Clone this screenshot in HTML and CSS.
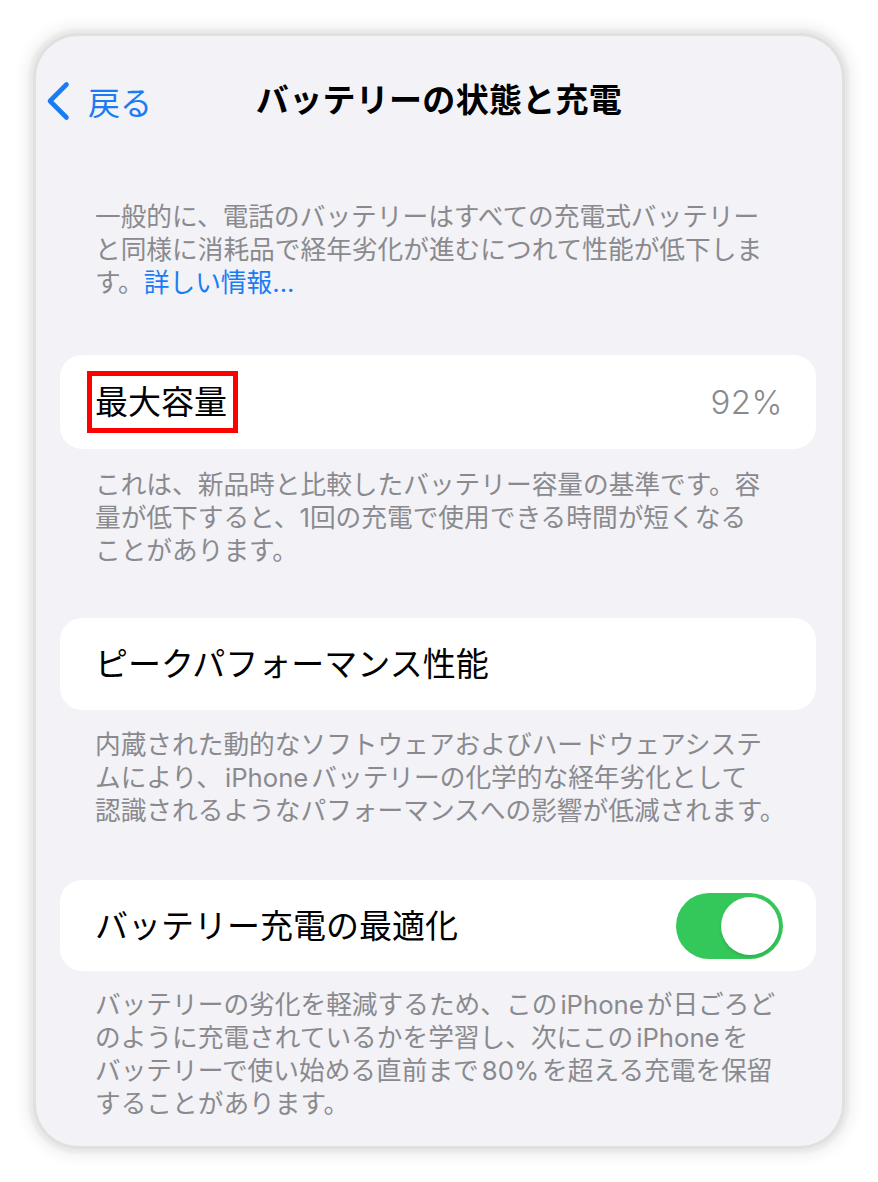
FILE: index.html
```html
<!DOCTYPE html>
<html lang="ja">
<head>
    <meta charset="UTF-8">
    <meta name="viewport" content="width=device-width, initial-scale=1.0">
    <title>バッテリーの状態と充電</title>
    <link rel="stylesheet" href="styles.css">
</head>
<body>
    <div class="phone">
        <div class="nav-bar">
            <a class="back-link" href="#">
                <svg class="chevron" width="26" height="40" viewBox="0 0 26 40">
                    <path d="M21.5 3.5 L5 20 L21.5 36.5" fill="none" stroke="#1a7cf5" stroke-width="4.6" stroke-linecap="round" stroke-linejoin="round"/>
                </svg>
                <span>戻る</span>
            </a>
            <h1 class="nav-title">バッテリーの状態と充電</h1>
        </div>

        <p class="intro">
            一般的に、電話のバッテリーはすべての充電式バッテリー<br>
            と同様に消耗品で経年劣化が進むにつれて性能が低下しま<br>
            す。<a class="more-link" href="#">詳しい情報...</a>
        </p>

        <div class="card card-capacity">
            <span class="row-label highlighted">最大容量</span>
            <span class="row-value">92%</span>
        </div>
        <p class="footer footer-capacity">
            これは、新品時と比較したバッテリー容量の基準です。容<br>
            量が低下すると、1回の充電で使用できる時間が短くなる<br>
            ことがあります。
        </p>

        <div class="card card-peak">
            <span class="row-label">ピークパフォーマンス性能</span>
        </div>
        <p class="footer footer-peak">
            内蔵された動的なソフトウェアおよびハードウェアシステ<br>
            ムにより、<span class="latin">iPhone</span>バッテリーの化学的な経年劣化として<br>
            認識されるようなパフォーマンスへの影響が低減されます。
        </p>

        <div class="card card-charging">
            <span class="row-label">バッテリー充電の最適化</span>
            <div class="toggle on">
                <div class="toggle-knob"></div>
            </div>
        </div>
        <p class="footer footer-charging">
            バッテリーの劣化を軽減するため、この<span class="latin">iPhone</span>が日ごろど<br>
            のように充電されているかを学習し、次にこの<span class="latin">iPhone</span>を<br>
            バッテリーで使い始める直前まで<span class="latin">80%</span>を超える充電を保留<br>
            することがあります。
        </p>
    </div>
</body>
</html>
```

FILE: styles.css
```css
body {
    margin: 0;
    padding: 36px;
    background-color: #ffffff;
    font-family: Inter, "Noto Sans CJK JP", sans-serif;
}

.phone {
    width: 806px;
    height: 1110px;
    background-color: #f2f2f7;
    border-radius: 42px;
    overflow: hidden;
    box-shadow: 0 0 0 3px #e0e0e0, 0 0 3px 7px #e9e9e9, 0 0 12px 13px #f4f4f4;
}

/* top navigation */
.nav-bar {
    height: 124px;
    display: flex;
    align-items: center;
    justify-content: center;
    position: relative;
}

.back-link {
    position: absolute;
    left: 9px;
    top: 42px;
    display: flex;
    align-items: center;
    gap: 17px;
    color: #1a7cf5;
    text-decoration: none;
    font-size: 32px;
}

.chevron {
    display: block;
}

.nav-title {
    margin: 0;
    font-size: 33px;
    font-weight: 700;
    color: #000;
    letter-spacing: 0.3px;
}

/* grouped text */
.intro,
.footer {
    margin: 0;
    padding: 0 40px 0 59px;
    font-size: 25.7px;
    line-height: 33px;
    color: #8a8a8e;
    white-space: nowrap;
}

.intro {
    margin-top: 40px;
}

.more-link {
    color: #1a7cf5;
    text-decoration: none;
}

.latin {
    margin: 0 3px;
}

.card {
    margin: 0 26px 0 24px;
    height: 92px;
    padding: 0 33px 0 35px;
    background-color: #fff;
    border-radius: 22px;
    display: flex;
    align-items: center;
    justify-content: space-between;
}

.card-capacity {
    margin-top: 56px;
    height: 94px;
}

.card-peak {
    margin-top: 51px;
}

.card-charging {
    margin-top: 53px;
    height: 91px;
}

.footer {
    padding-top: 19px;
}

.footer-peak {
    padding-top: 18px;
}

.footer-charging {
    padding-top: 17px;
}

.row-label {
    font-size: 33px;
    line-height: 40px;
    color: #000;
}

.row-label.highlighted {
    display: inline-block;
    padding: 6px 6px 6px 3px;
    margin: 0 0 0 -8px;
    border: 5px solid #ff0000;
    background-color: #fff;
}

.row-value {
    font-size: 33px;
    font-weight: 300;
    color: #8a8a8e;
    letter-spacing: 0.5px;
}

/* switch */
.toggle {
    width: 107px;
    height: 66px;
    border-radius: 33px;
    background-color: #e9e9eb;
    position: relative;
}

.toggle.on {
    background-color: #34c759;
}

.toggle-knob {
    position: absolute;
    top: 4px;
    left: 4px;
    width: 58px;
    height: 58px;
    border-radius: 50%;
    background-color: #fff;
    box-shadow: 0 2px 3px rgba(0, 0, 0, 0.12);
}

.toggle.on .toggle-knob {
    left: 45px;
}
```
